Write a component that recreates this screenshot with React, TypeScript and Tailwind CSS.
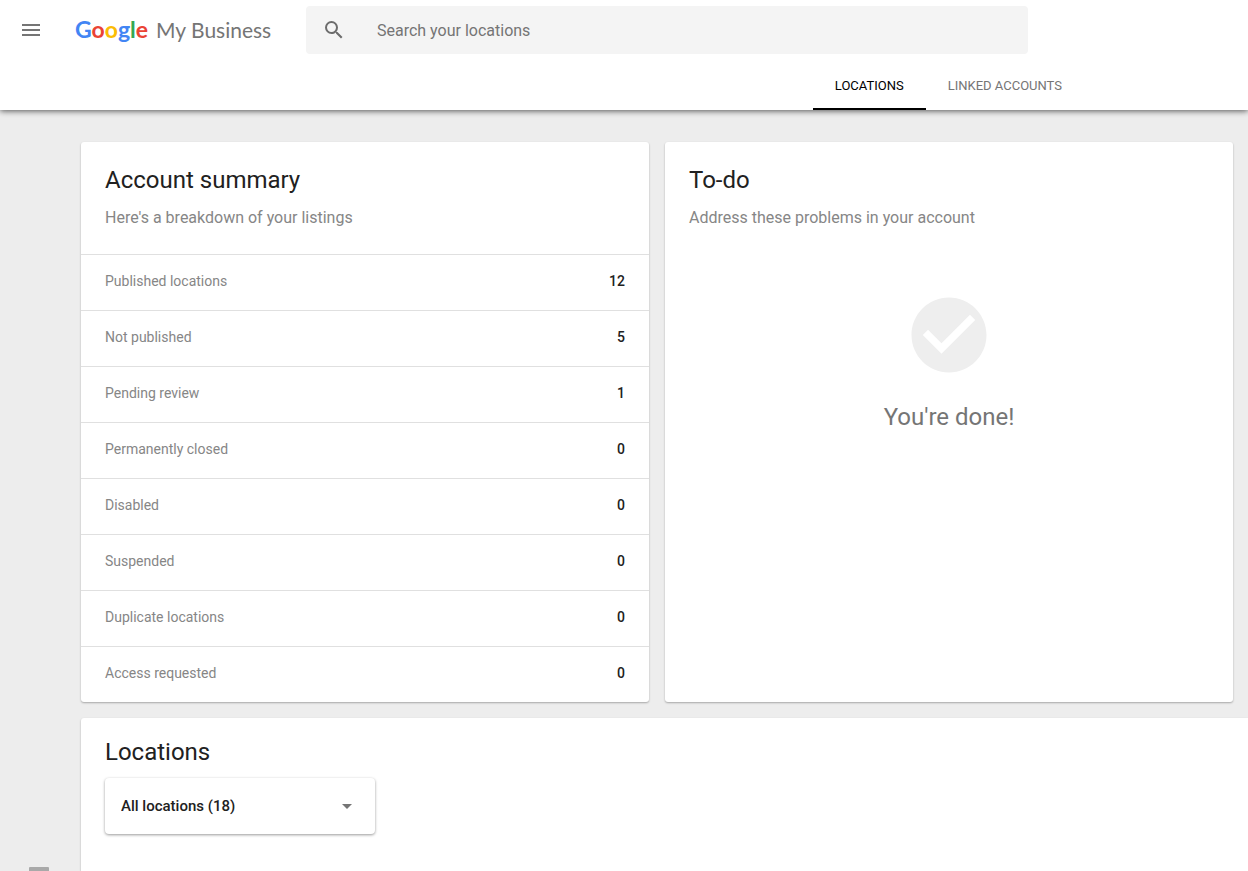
import React from 'react';

const summary: { label: string; count: number }[] = [
  { label: 'Published locations', count: 12 },
  { label: 'Not published', count: 5 },
  { label: 'Pending review', count: 1 },
  { label: 'Permanently closed', count: 0 },
  { label: 'Disabled', count: 0 },
  { label: 'Suspended', count: 0 },
  { label: 'Duplicate locations', count: 0 },
  { label: 'Access requested', count: 0 },
];

const cardShadow = 'shadow-[0_1px_2px_rgba(0,0,0,0.3)]';

function Logo() {
  return (
    <a href="#home" className="ml-8 flex w-[231px] shrink-0 items-baseline pb-0.5 whitespace-nowrap font-['Lato',sans-serif]">
      <span className="text-[23px] leading-8 font-bold">
        <span className="text-[#4285f4]">G</span>
        <span className="text-[#ea4335]">o</span>
        <span className="text-[#fbbc05]">o</span>
        <span className="text-[#4285f4]">g</span>
        <span className="text-[#34a853]">l</span>
        <span className="text-[#ea4335]">e</span>
      </span>
      <span className="ml-2 text-[21px] leading-8 text-[#757575]">My Business</span>
    </a>
  );
}

function Header() {
  return (
    <header className="relative bg-white shadow-[0_1px_6px_rgba(0,0,0,0.65)]">
      <div className="flex h-[60px] items-center pl-[19px]">
        <button type="button" aria-label="Main menu" className="size-6 shrink-0 text-[#757575]">
          <svg viewBox="0 0 24 24" className="size-6" fill="currentColor">
            <path d="M3 18h18v-2H3v2zm0-5h18v-2H3v2zm0-7v2h18V6H3z" />
          </svg>
        </button>
        <Logo />
        <label className="flex h-12 w-full max-w-[722px] items-center rounded bg-[#f4f4f4] pl-4">
          <svg viewBox="0 0 24 24" className="size-6 shrink-0 text-[#6c6c6c]" fill="currentColor" aria-hidden="true">
            <path d="M15.5 14h-.79l-.28-.27A6.471 6.471 0 0 0 16 9.5 6.5 6.5 0 1 0 9.5 16c1.61 0 3.09-.59 4.23-1.57l.27.28v.79l5 4.99L20.49 19l-4.99-5zm-6 0C7.01 14 5 11.99 5 9.5S7.01 5 9.5 5 14 7.01 14 9.5 11.99 14 9.5 14z" />
          </svg>
          <input
            type="search"
            aria-label="Search your locations"
            placeholder="Search your locations"
            className="ml-[31px] min-w-0 flex-1 bg-transparent pt-0.5 text-base outline-none placeholder:text-[#757575]"
          />
        </label>
      </div>
      <nav className="flex h-[50px] justify-end pr-[164px] text-[13px]">
        <a href="#locations" aria-current="page" className="flex items-center justify-center border-b-2 border-black px-[22px] pt-1 text-black">
          LOCATIONS
        </a>
        <a href="#linked" className="flex items-center justify-center border-b-2 border-transparent px-[22px] pt-1 text-[#757575]">
          LINKED ACCOUNTS
        </a>
      </nav>
    </header>
  );
}

function CardHeading({ title, text }: { title: string; text: string }) {
  return (
    <div className="h-28 px-6 pt-[22px]">
      <h2 className="text-2xl text-[#212121]">{title}</h2>
      <p className="mt-[10px] text-base text-[#868686]">{text}</p>
    </div>
  );
}

export default function App() {
  return (
    <div className="flex min-h-screen flex-col bg-[#ededed] font-['Roboto',sans-serif]">
      <Header />
      <div className="flex flex-1">
        <aside className="flex w-[81px] shrink-0 flex-col justify-end pl-[29px]">
          <div className="h-1 w-5 rounded-t-[1px] bg-[#a9a9a9]" />
        </aside>
        <main className="flex min-w-0 flex-1 flex-col pt-8">
          <div className="grid grid-cols-2 gap-4 pr-[15px]">
            <section className={`rounded-[3px] bg-white ${cardShadow}`}>
              <CardHeading title="Account summary" text="Here's a breakdown of your listings" />
              <table className="w-full border-separate border-spacing-0 text-sm">
                <tbody>
                  {summary.map((row) => (
                    <tr key={row.label}>
                      <th scope="row" className="h-14 border-t border-[#e0e0e0] pb-1 pl-6 text-left font-normal text-[#868686]">
                        {row.label}
                      </th>
                      <td className="h-14 border-t border-[#e0e0e0] pr-6 pb-1 text-right font-medium text-[#212121]">{row.count}</td>
                    </tr>
                  ))}
                </tbody>
              </table>
            </section>
            <section className={`rounded-[3px] bg-white ${cardShadow}`}>
              <CardHeading title="To-do" text="Address these problems in your account" />
              <div className="flex flex-col items-center pt-9">
                <svg viewBox="0 0 24 24" className="size-[90px]" fill="#eeeeee" aria-hidden="true">
                  <path d="M12 2C6.48 2 2 6.48 2 12s4.48 10 10 10 10-4.48 10-10S17.52 2 12 2zm-2 15l-5-5 1.41-1.41L10 14.17l7.59-7.59L19 8l-9 9z" />
                </svg>
                <p className="mt-[21px] text-2xl text-[#757575]">You're done!</p>
              </div>
            </section>
          </div>
          <section className={`mt-4 flex-1 rounded-tl-[3px] bg-white px-6 pt-[18px] pb-9 ${cardShadow}`}>
            <h2 className="text-2xl text-[#212121]">Locations</h2>
            <div className="mt-[10px] flex w-[270px] items-center rounded-sm bg-white shadow-[0_1px_3px_rgba(0,0,0,0.4)]">
              <select
                aria-label="Filter locations"
                className="h-14 min-w-0 flex-1 appearance-none bg-transparent pl-4 text-[15px] font-medium text-[#212121] outline-none"
              >
                <option>All locations (18)</option>
              </select>
              <svg viewBox="0 0 24 24" className="pointer-events-none mr-4 size-6 shrink-0" fill="#757575" aria-hidden="true">
                <path d="M7 10l5 5 5-5z" />
              </svg>
            </div>
          </section>
        </main>
      </div>
    </div>
  );
}
